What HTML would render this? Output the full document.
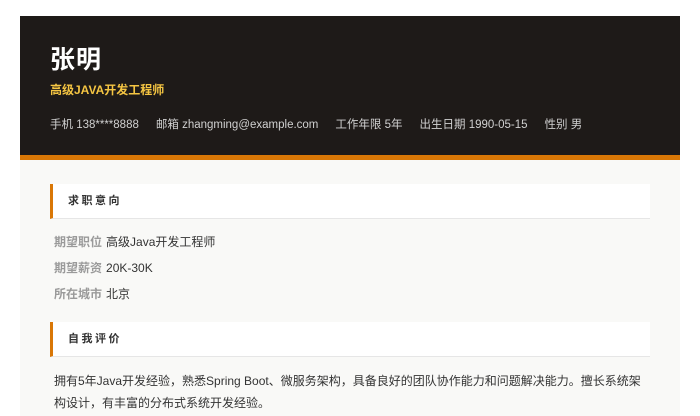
<!DOCTYPE html>
<html><head><meta charset="utf-8"><style>
*{margin:0;padding:0;box-sizing:border-box}
body{width:700px;height:400px;overflow:hidden;background:#fff;font-family:"Liberation Sans","Noto Sans CJK SC",sans-serif;position:relative}
.wrap{position:absolute;left:20px;top:16px;width:660px;height:400px;background:#f9f9f7}
.hd{height:144px;background:#1e1a18;border-bottom:5px solid #d97706;padding:27px 30px 0}
.hd h1{color:#fff;font-size:25px;font-weight:bold;line-height:34px;letter-spacing:1px}
.hd .sub{color:#f5c542;font-size:12px;font-weight:bold;margin-top:5px;line-height:16px}
.hd .info{color:#d0d0d0;font-size:11.5px;margin-top:20px;line-height:14px;white-space:nowrap}
.hd .info span{margin-right:17px}
.sec{margin:24px 30px 0;height:35px;background:#fff;border-left:3px solid #d97706;border-bottom:1px solid #e6e6e6;padding-left:15px;font-size:11px;font-weight:bold;letter-spacing:2.5px;color:#333;line-height:34px}
.row{margin-left:34px;font-size:12px;color:#333;line-height:26px}
.row b{color:#9a9a9a;font-weight:bold;margin-right:4px}
.rows{margin-top:10px}
p{margin:13px 30px 0 34px;font-size:12px;color:#333;line-height:22px}
</style></head><body><div class="wrap">
<div class="hd"><h1>张明</h1><div class="sub">高级JAVA开发工程师</div>
<div class="info"><span>手机 138****8888</span><span>邮箱 zhangming@example.com</span><span>工作年限 5年</span><span>出生日期 1990-05-15</span><span>性别 男</span></div></div>
<div class="sec">求职意向</div>
<div class="rows"><div class="row"><b>期望职位</b>高级Java开发工程师</div>
<div class="row"><b>期望薪资</b>20K-30K</div>
<div class="row"><b>所在城市</b>北京</div></div>
<div class="sec" style="margin-top:15px">自我评价</div>
<p>拥有5年Java开发经验，熟悉Spring Boot、微服务架构，具备良好的团队协作能力和问题解决能力。擅长系统架构设计，有丰富的分布式系统开发经验。</p>
</div></body></html>
